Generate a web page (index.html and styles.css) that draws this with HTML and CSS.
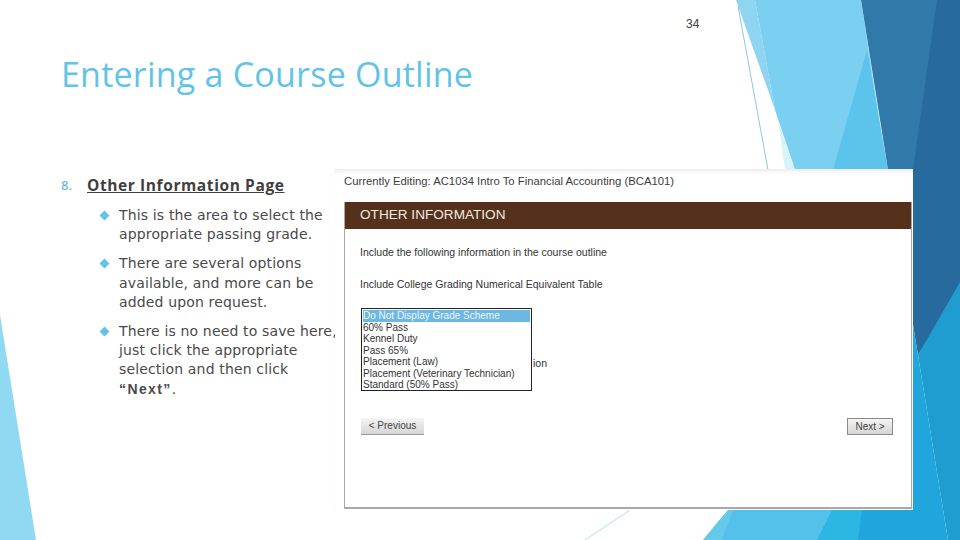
FILE: index.html
```html
<!DOCTYPE html>
<html lang="en">
<head>
<meta charset="utf-8">
<title>Entering a Course Outline</title>
<link rel="stylesheet" href="styles.css">
</head>
<body>
<div class="slide">
  <svg class="backdrop" viewBox="0 0 960 540" width="960" height="540" aria-hidden="true">
    <polygon points="0,315 0,540 36,540" fill="#90d9f3"/>
    <polygon points="736,0 755,0 775,110" fill="#8fd5f1"/>
    <polygon points="755,0 861,0 887,170 795,170 775,110" fill="#7bd0f1"/>
    <polygon points="867,50 833,170 888,170" fill="#5cc4ea"/>
    <polygon points="861,0 960,0 960,170 888,170" fill="#3079a9"/>
    <polygon points="937,0 960,0 960,290 918,355 913,325 913,170" fill="#276a9e"/>
    <polygon points="918,355 960,282 960,540 948,540" fill="#1f9cd0"/>
    <polygon points="913,325 918,355 948,540 913,540" fill="#20a5dc"/>
    <polygon points="703,540 728,510 913,510 913,540" fill="#53c1ea"/>
    <polygon points="703,540 728,510 733,510 722,540" fill="#66c9ec"/>
    <polygon points="832,510 913,510 913,540 817,540" fill="#2bb6e4"/>
    <polygon points="862,510 913,510 913,540 858,540" fill="#20a5dc"/>
    <line x1="738" y1="6" x2="768" y2="170" stroke="#8cc8de" stroke-width="1"/>
    <polygon points="778,120 795,170 785,170" fill="#d9f3fb"/>
    <line x1="585" y1="540" x2="630" y2="510" stroke="#b5dbe3" stroke-width="1"/>
  </svg>
  <div class="page-number">34</div>
  <main class="content">
    <h1 class="title">Entering a Course Outline</h1>
    <div class="body">
      <section class="notes">
        <h2 class="heading"><span class="num">8.</span><span class="heading-text">Other Information Page</span></h2>
        <ul class="bullets">
          <li>This is the area to select the appropriate passing grade.</li>
          <li>There are several options available, and more can be added upon request.</li>
          <li>There is no need to save here, just click the appropriate selection and then click<br><b>“Next”</b>.</li>
        </ul>
      </section>
      <section class="shot">
        <div class="editing">Currently Editing: AC1034 Intro To Financial Accounting (BCA101)</div>
        <div class="panel">
          <div class="banner">OTHER INFORMATION</div>
          <p class="line first">Include the following information in the course outline</p>
          <p class="line second">Include College Grading Numerical Equivalent Table</p>
          <div class="select-row">
            <ul class="listbox">
              <li class="selected">Do Not Display Grade Scheme</li>
              <li>60% Pass</li>
              <li>Kennel Duty</li>
              <li>Pass 65%</li>
              <li>Placement (Law)</li>
              <li>Placement (Veterinary Technician)</li>
              <li>Standard (50% Pass)</li>
            </ul>
            <span class="peek">ion</span>
          </div>
          <div class="buttons">
            <button class="btn prev" type="button">&lt; Previous</button>
            <button class="btn next" type="button">Next &gt;</button>
          </div>
        </div>
      </section>
    </div>
  </main>
</div>
</body>
</html>
```

FILE: styles.css
```css
* { box-sizing: border-box; }
html, body { margin: 0; padding: 0; }
body { background: #fff; }
.slide {
  position: relative;
  width: 960px;
  height: 540px;
  overflow: hidden;
  background: #fff;
  font-family: "DejaVu Sans", sans-serif;
}
.backdrop { position: absolute; left: 0; top: 0; }
.page-number {
  position: absolute;
  left: 686px;
  top: 17px;
  font: 12px/14px "Liberation Sans", sans-serif;
  color: #404040;
}
.content {
  position: relative;
  padding: 54px 0 0 61px;
}
.title {
  margin: 0;
  font: 500 34px/40px "Open Sans", sans-serif;
  letter-spacing: 0.22px;
  color: #62c3e6;
}
.body {
  display: flex;
  margin-top: 76px;
}
.notes { width: 274px; flex: none; padding-top: 5px; }
.heading {
  display: flex;
  margin: 0;
  font: 700 15.5px/20px "Open Sans", sans-serif;
  letter-spacing: 0.6px;
  color: #404040;
}
.num {
  width: 26px;
  font-size: 13px;
  font-weight: 600;
  letter-spacing: 0;
  color: #6cc3dd;
}
.heading-text { text-decoration: underline; }
.bullets {
  list-style: none;
  margin: 11px -10px 0 0;
  padding: 0 0 0 58px;
  font: 14px/19.2px "DejaVu Sans", sans-serif;
  color: #4a4a4a;
  letter-spacing: 0.15px;
}
.bullets li { position: relative; margin-bottom: 10px; }
.bullets li::before {
  content: "";
  position: absolute;
  left: -18px;
  top: 6px;
  width: 7px;
  height: 7px;
  background: #62c3e6;
  transform: rotate(45deg);
}
.bullets b { font-family: "Liberation Sans", sans-serif; letter-spacing: 1.4px; }
.shot {
  position: relative;
  flex: none;
  width: 578px;
  height: 341px;
  margin-top: -1px;
  padding: 4px 0 1px 9px;
  background: #fff;
  display: flex;
  flex-direction: column;
  font-family: "Liberation Sans", sans-serif;
  box-shadow: inset 0 4px 4px -2px #e8e8e8;
}
.editing {
  height: 29px;
  font-size: 11.3px;
  line-height: 16px;
  color: #3c3c3c;
}
.panel {
  flex: 1;
  border-left: 1px solid #a9a9a9;
  border-right: 1px solid #a9a9a9;
  border-bottom: 2px solid #a9a9a9;
  margin-right: 1px;
  display: flex;
  flex-direction: column;
}
.banner {
  height: 27px;
  padding-left: 15px;
  background: #55301a;
  color: #efe9e3;
  font-size: 13.6px;
  line-height: 26px;
}
.line {
  margin: 0;
  padding-left: 15px;
  font-size: 10.5px;
  line-height: 12px;
  color: #333;
}
.first { margin-top: 17px; }
.second { margin-top: 20px; }
.select-row {
  display: flex;
  align-items: flex-end;
  margin: 18px 0 0 16px;
}
.listbox {
  list-style: none;
  margin: 0;
  padding: 1px;
  width: 171px;
  height: 83px;
  border: 1px solid #1c2530;
  font-size: 10px;
  line-height: 11.5px;
  color: #333;
}
.listbox li { white-space: nowrap; }
.selected { background: #6cb8e2; color: #eef6fb; }
.peek {
  font-size: 10.5px;
  line-height: 12px;
  color: #333;
  margin: 0 0 22px 1px;
}
.buttons {
  display: flex;
  justify-content: space-between;
  margin: 27px 18px 0 16px;
}
.btn {
  height: 17px;
  padding: 0;
  font: 10px/14px "Liberation Sans", sans-serif;
  color: #444;
  background: linear-gradient(#f4f4f4, #d6d6d6);
  border: 0;
  border-bottom: 1px solid #999;
}
.prev { width: 63px; }
.next { width: 46px; border: 1px solid #8a8a8a; }
```
